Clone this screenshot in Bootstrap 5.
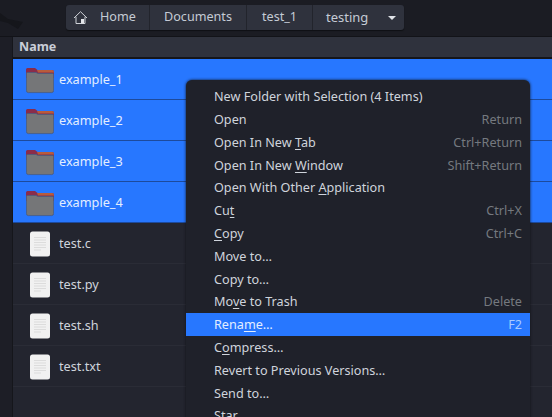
<!DOCTYPE html>
<html lang="en">
<head>
<meta charset="utf-8">
<title>Files</title>
<link href="https://cdn.jsdelivr.net/npm/bootstrap@5.3.0/dist/css/bootstrap.min.css" rel="stylesheet">
<style>
html,body{margin:0;height:417px;overflow:hidden;background:#23252f}
body{font-family:"Noto Sans","Open Sans",sans-serif;font-size:12.6px;color:#d3dae3;position:relative}
.topbar{height:37px;background:#1b1c23;border-bottom:1px solid #121318;padding:5px 0 0 66px;position:relative}
.wisp{position:absolute;left:0;top:10px}
.crumbs{height:25px;width:338px;background:#2f323d;border-radius:3px;box-shadow:0 1px 1px #0f1014}
.crumb{height:100%;border-right:1px solid #22242c;color:#c5cbd5}
.crumb:last-child{border-right:0}
.c-home{width:84px;padding-left:7px;gap:12px}
.c-docs{width:97px;justify-content:center}
.c-test{width:66px;justify-content:center}
.c-last{flex:1;padding-left:13px;gap:20px;font-size:13px}
.caret{width:0;height:0;border-left:4.5px solid transparent;border-right:4.5px solid transparent;border-top:4.5px solid #e0e3e8;margin-top:1px}
.mainarea{height:380px}
.sidestrip{width:13px;background:#1d1e26;border-right:1px solid #15161b}
.filelist{flex:1;background:#23252f}
.namehead{height:22px;background:#2f323d;border-bottom:2px solid #15161b;padding-left:6px;font-weight:700;color:#c9ced8;line-height:20px;font-size:12.5px}
.frow{height:41px;padding:2px 0 0 13px;border-bottom:1px solid #2a2c36;gap:5px;font-size:12.7px;color:#cfd4dc}
.frow.picked{background:#2777ff;border-bottom-color:#1d4a9c;color:#e3eeff}
.ficon{width:28px;height:28px;flex:none}
.ctxmenu{position:absolute;left:186px;top:80px;width:344px;height:345px;background:#1f212a;border-radius:6px 6px 0 0;box-shadow:0 0 3px #101116;padding-top:5.4px}
.mi{height:22.8px;padding:0 8px 0 28px;font-size:12.65px;color:#cfd4dc}
.mi .keys{color:#75797f}
.mi.hot{background:#2777ff;color:#e3eeff}
.mi.hot .keys{color:#a9cbff}
.mi u{text-underline-offset:2px}
</style>
</head>
<body>
<div class="topbar">
  <svg class="wisp" width="24" height="20" viewBox="0 0 24 20"><path d="M0 3 8 9 23 12 18 19 8 13 0 11Z" fill="#15161b"/></svg>
  <div class="crumbs d-flex position-relative">
    <div class="crumb c-home d-flex align-items-center">
      <svg width="15" height="15" viewBox="0 0 15 15" fill="none" stroke="#cfd2d8" stroke-width="1"><path d="M1 8 7.500 1.700 14 8M3 6.800V13.500H12V6.800"/><rect x="8" y="9" width="3" height="4.500" fill="#e4e6ea" stroke="none"/></svg>
      <span>Home</span>
    </div>
    <div class="crumb c-docs d-flex align-items-center">Documents</div>
    <div class="crumb c-test d-flex align-items-center">test_1</div>
    <div class="crumb c-last d-flex align-items-center"><span>testing</span><i class="caret"></i></div>
  </div>
</div>
<div class="mainarea d-flex">
  <div class="sidestrip"></div>
  <div class="filelist">
    <div class="namehead">Name</div>
    <div class="frow picked d-flex align-items-center"><svg class="ficon" viewBox="0 0 28 28"><use href="#ic-folder"/></svg><span>example_1</span></div>
    <div class="frow picked d-flex align-items-center"><svg class="ficon" viewBox="0 0 28 28"><use href="#ic-folder"/></svg><span>example_2</span></div>
    <div class="frow picked d-flex align-items-center"><svg class="ficon" viewBox="0 0 28 28"><use href="#ic-folder"/></svg><span>example_3</span></div>
    <div class="frow picked d-flex align-items-center"><svg class="ficon" viewBox="0 0 28 28"><use href="#ic-folder"/></svg><span>example_4</span></div>
    <div class="frow d-flex align-items-center"><svg class="ficon" viewBox="0 0 28 28"><use href="#ic-doc"/></svg><span>test.c</span></div>
    <div class="frow d-flex align-items-center"><svg class="ficon" viewBox="0 0 28 28"><use href="#ic-doc"/></svg><span>test.py</span></div>
    <div class="frow d-flex align-items-center"><svg class="ficon" viewBox="0 0 28 28"><use href="#ic-doc"/></svg><span>test.sh</span></div>
    <div class="frow d-flex align-items-center"><svg class="ficon" viewBox="0 0 28 28"><use href="#ic-doc"/></svg><span>test.txt</span></div>
  </div>
</div>
<div class="ctxmenu">
  <div class="mi d-flex align-items-center justify-content-between"><span>New Folder with Selection (4 Items)</span></div>
  <div class="mi d-flex align-items-center justify-content-between"><span>Open</span><span class="keys">Return</span></div>
  <div class="mi d-flex align-items-center justify-content-between"><span>Open In New <u>T</u>ab</span><span class="keys">Ctrl+Return</span></div>
  <div class="mi d-flex align-items-center justify-content-between"><span>Open In New <u>W</u>indow</span><span class="keys">Shift+Return</span></div>
  <div class="mi d-flex align-items-center justify-content-between"><span>Open With Other <u>A</u>pplication</span></div>
  <div class="mi d-flex align-items-center justify-content-between"><span>Cu<u>t</u></span><span class="keys">Ctrl+X</span></div>
  <div class="mi d-flex align-items-center justify-content-between"><span><u>C</u>opy</span><span class="keys">Ctrl+C</span></div>
  <div class="mi d-flex align-items-center justify-content-between"><span>Move to…</span></div>
  <div class="mi d-flex align-items-center justify-content-between"><span>Copy to…</span></div>
  <div class="mi d-flex align-items-center justify-content-between"><span>Mo<u>v</u>e to Trash</span><span class="keys">Delete</span></div>
  <div class="mi hot d-flex align-items-center justify-content-between"><span>Rena<u>m</u>e…</span><span class="keys">F2</span></div>
  <div class="mi d-flex align-items-center justify-content-between"><span>C<u>o</u>mpress…</span></div>
  <div class="mi d-flex align-items-center justify-content-between"><span>Revert to Previous Versions…</span></div>
  <div class="mi d-flex align-items-center justify-content-between"><span>Send to…</span></div>
  <div class="mi d-flex align-items-center justify-content-between"><span>Star</span></div>
</div>
<svg width="0" height="0" class="d-block">
  <defs>
    <g id="ic-folder">
      <path d="M0 3.500Q0 2 1.500 2H9L11.500 4H26Q28 4 28 6V12H0Z" fill="#8a2c4b"/>
      <path d="M11 4H26Q28 4 28 6V6.500H12Z" fill="#b85c3c"/>
      <path d="M.4 7.500Q.4 6.500 1.400 6.500H10L12 7.500H26.600Q27.600 7.500 27.600 8.500V24.500Q27.600 26.600 25.600 26.600H2.400Q.4 26.600 .4 24.500Z" fill="#757678" stroke="#4a5a7d" stroke-width=".8"/>
    </g>
    <g id="ic-doc">
      <rect x="4" y="1.500" width="20" height="25" rx="2.500" fill="#f1f1f1"/>
      <path d="M8 7H20V8H8ZM8 9.500H20V10.500H8ZM8 12H20V13H8ZM8 14.500H20V15.500H8ZM8 17H20V18H8ZM8 19.500H15V20.500H8Z" fill="#dcdcdc"/>
    </g>
  </defs>
</svg>
</body>
</html>
